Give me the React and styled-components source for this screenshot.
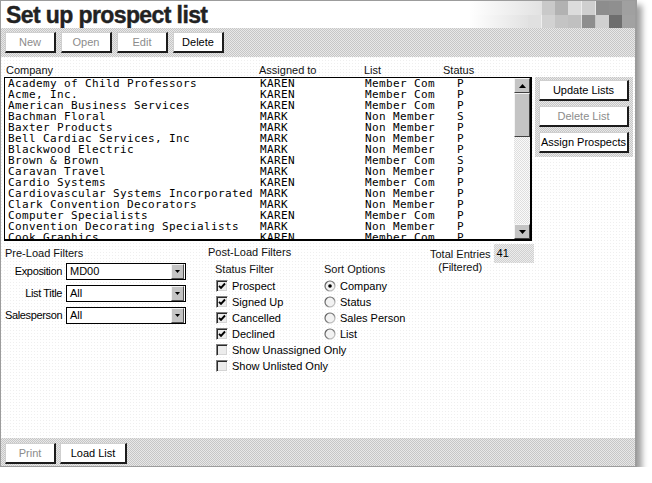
import styled, { createGlobalStyle } from 'styled-components'

const GlobalStyle = createGlobalStyle`
  html, body {
    margin: 0;
    padding: 0;
    background: #fff;
  }
  body {
    font-family: "Liberation Sans", Arial, sans-serif;
    font-size: 11px;
    color: #000;
  }
`

const checker = (a, b) => `repeating-conic-gradient(${a} 0% 25%, ${b} 0% 50%) 0 0 / 2px 2px`
const faintDots = `conic-gradient(from 90deg at 1px 1px, #fff 0 180deg, #efefef 0 270deg, #fff 0) 0 0 / 3px 3px`

const rows = [
  ['Academy of Child Professors', 'KAREN', 'Member Com', 'P'],
  ['Acme, Inc.', 'KAREN', 'Member Com', 'P'],
  ['American Business Services', 'KAREN', 'Member Com', 'P'],
  ['Bachman Floral', 'MARK', 'Non Member', 'S'],
  ['Baxter Products', 'MARK', 'Non Member', 'P'],
  ['Bell Cardiac Services, Inc', 'MARK', 'Non Member', 'P'],
  ['Blackwood Electric', 'MARK', 'Non Member', 'P'],
  ['Brown & Brown', 'KAREN', 'Member Com', 'S'],
  ['Caravan Travel', 'MARK', 'Non Member', 'P'],
  ['Cardio Systems', 'KAREN', 'Member Com', 'P'],
  ['Cardiovascular Systems Incorporated', 'MARK', 'Non Member', 'P'],
  ['Clark Convention Decorators', 'MARK', 'Non Member', 'P'],
  ['Computer Specialists', 'KAREN', 'Member Com', 'P'],
  ['Convention Decorating Specialists', 'MARK', 'Non Member', 'P'],
  ['Cook Graphics', 'KAREN', 'Member Com', 'P'],
]

// Window frame
const Window = styled.div`
  width: 637px;
  height: 467px;
  box-sizing: border-box;
  border: 1px solid #9c9c9c;
  border-right: 2px solid #9c9c9c;
  display: flex;
  flex-direction: column;
  box-shadow: 5px 5px 6px rgba(0, 0, 0, 0.38);
`

const Header = styled.header`
  height: 27px;
  display: flex;
  justify-content: space-between;
  background: #fff;
`

const Title = styled.h1`
  margin: 0;
  padding-left: 5px;
  font-family: "Liberation Sans", Arial, sans-serif;
  font-size: 23px;
  font-weight: bold;
  line-height: 28px;
  letter-spacing: -0.6px;
  color: #222;
  -webkit-text-stroke: 0.4px #222;
`

const Toolbar = styled.div`
  height: ${p => p.$h}px;
  box-sizing: border-box;
  padding: ${p => p.$top}px 4px 0;
  display: flex;
  gap: ${p => p.$gap}px;
  background: ${checker('#c6c6c6', '#e8e8e8')};
`

const Button = styled.button`
  width: ${p => p.$w}px;
  height: 21px;
  box-sizing: border-box;
  padding: 0;
  background: #fff;
  border-style: solid;
  border-width: 1px 2px 2px 1px;
  border-color: #cfcfcf #1c1c1c #1c1c1c #cfcfcf;
  font-family: "Liberation Sans", Arial, sans-serif;
  font-size: 11px;
  color: ${p => (p.disabled ? '#8c8c8c' : '#000')};
`

const Content = styled.main`
  flex: 1;
  padding: 7px 2px 0 3px;
  background: ${faintDots};
`

const TopSection = styled.div`
  display: grid;
  grid-template-columns: 528px 98px;
  grid-template-rows: 13px auto;
  column-gap: 3px;
  align-items: start;
`

const ColumnHeads = styled.div`
  grid-column: 1;
  grid-row: 1;
  height: 13px;
  padding-left: 2px;
  display: grid;
  grid-template-columns: 253px 105px 79px auto;
  line-height: 13px;
  color: #111;
`

const ListBox = styled.div`
  grid-column: 1;
  grid-row: 2;
  height: 164px;
  box-sizing: border-box;
  border-style: solid;
  border-width: 1px 2px 2px 1px;
  border-color: #000;
  background: #fff;
  display: flex;
  overflow: hidden;
`

const Rows = styled.div`
  flex: 1;
  min-width: 0;
  padding-left: 3px;
  overflow: hidden;
`

const Row = styled.div`
  display: grid;
  grid-template-columns: 252px 105px 92px auto;
  height: 11px;
  line-height: 11px;
  font-family: "DejaVu Sans Mono", "Liberation Mono", monospace;
  font-size: 11px;
  letter-spacing: 0.38px;
  white-space: pre;
`

const ScrollBar = styled.div`
  width: 16px;
  flex-shrink: 0;
  display: flex;
  flex-direction: column;
  background: ${checker('#fafafa', '#dedede')};
`

const ScrollButton = styled.div`
  height: 15px;
  box-sizing: border-box;
  background: #c4c4c4;
  border-style: solid;
  border-width: 1px;
  border-color: #f4f4f4 #404040 #404040 #f4f4f4;
  display: flex;
  align-items: center;
  justify-content: center;
`

const Thumb = styled.div`
  height: 44px;
  box-sizing: border-box;
  background: #c4c4c4;
  border-style: solid;
  border-width: 1px;
  border-color: #f4f4f4 #404040 #404040 #f4f4f4;
`

const Track = styled.div`
  flex: 1;
`

const SidePanel = styled.div`
  grid-column: 2;
  grid-row: 2;
  padding: 3px 4px 4px;
  display: flex;
  flex-direction: column;
  gap: 5px;
  background: ${checker('#c6c6c6', '#e8e8e8')};
`

const Filters = styled.div`
  margin-top: 3px;
  padding-left: 1px;
  display: grid;
  grid-template-columns: 203px 222px auto;
  align-items: start;
`

const GroupTitle = styled.div`
  margin-top: ${p => p.$top}px;
  line-height: 13px;
  color: #111;
`

const SelectGrid = styled.div`
  margin-top: 3px;
  display: grid;
  grid-template-columns: 57px 120px;
  column-gap: 4px;
  row-gap: 5px;
`

const FieldLabel = styled.label`
  line-height: 17px;
  text-align: right;
  white-space: nowrap;
  letter-spacing: -0.35px;
`

const Select = styled.div`
  height: 17px;
  box-sizing: border-box;
  border: 1px solid #000;
  background: #fff;
  display: flex;
`

const SelectValue = styled.span`
  flex: 1;
  padding-left: 3px;
  line-height: 15px;
`

const DropButton = styled.span`
  width: 13px;
  box-sizing: border-box;
  margin-right: 1px;
  background: #c4c4c4;
  border-style: solid;
  border-width: 1px;
  border-color: #f4f4f4 #505050 #505050 #f4f4f4;
  display: flex;
  align-items: center;
  justify-content: center;
`

const PostGrid = styled.div`
  margin-top: 4px;
  display: grid;
  grid-template-columns: 116px auto;
`

const OptionCol = styled.div`
  padding-left: ${p => p.$indent}px;
`

const OptionHead = styled.div`
  line-height: 13px;
  margin-bottom: 2px;
  color: #111;
`

const Option = styled.div`
  height: 16px;
  display: flex;
  align-items: center;
  gap: 4px;
  white-space: nowrap;

  svg {
    flex-shrink: 0;
  }
`

const CheckBox = styled.span`
  width: 12px;
  height: 12px;
  flex-shrink: 0;
  margin-left: 1px;
  box-sizing: border-box;
  border-style: solid;
  border-width: 1px;
  border-color: #808080 #fff #fff #808080;
  box-shadow: inset 1px 1px 0 #2a2a2a, inset -1px -1px 0 #d4d4d4;
  background: #ececec;
  display: flex;
  align-items: center;
  justify-content: center;
`

const Totals = styled.div`
  display: flex;
  gap: 3px;
`

const TotalsLabel = styled.div`
  margin-top: 4px;
  line-height: 13px;
  text-align: center;
  color: #111;
`

const TotalsValue = styled.div`
  width: 40px;
  height: 19px;
  box-sizing: border-box;
  padding-left: 3px;
  line-height: 19px;
  background: ${checker('#d0d0d0', '#ececec')};
`

function Arrow({ down }) {
  return (
    <svg width="7" height="4" viewBox="0 0 7 4">
      <path d={down ? 'M0 0H7L3.5 4Z' : 'M0 4H7L3.5 0Z'} fill="#000" />
    </svg>
  )
}

function SmallArrow() {
  return (
    <svg width="5" height="3" viewBox="0 0 5 3">
      <path d="M0 0H5L2.5 3Z" fill="#000" />
    </svg>
  )
}

function Check() {
  return (
    <svg width="8" height="8" viewBox="0 0 8 8">
      <polyline points="1,3.8 3,5.8 7,1.5" fill="none" stroke="#000" strokeWidth="1.9" />
    </svg>
  )
}

function Radio({ checked }) {
  return (
    <svg width="12" height="12" viewBox="0 0 12 12">
      <defs>
        <linearGradient id="rimShade" x1="0" y1="0" x2="1" y2="1">
          <stop offset="0" stopColor="#555" />
          <stop offset="0.5" stopColor="#7a7a7a" />
          <stop offset="1" stopColor="#e4e4e4" />
        </linearGradient>
      </defs>
      <circle cx="6" cy="6" r="5" fill="#f2f2f2" stroke="url(#rimShade)" strokeWidth="1.2" />
      {checked && <circle cx="6" cy="6" r="1.8" fill="#000" />}
    </svg>
  )
}

function Mosaic() {
  const top = [
    [73, '#c9c9c9'], [86, '#b2b2b2'], [99, '#dcdcdc'], [113, '#cfcfcf'],
    [127, '#8d8d8d'], [140, '#8f8f8f'], [153, '#a0a0a0'],
  ]
  const bottom = [
    [59, '#e0e0e0'], [73, '#d2d2d2'], [86, '#c4c4c4'], [99, '#c0c0c0'],
    [113, '#8e8e8e'], [127, '#d0d0d0'], [140, '#6e6e6e'], [153, '#a2a2a2'],
  ]
  return (
    <svg width="166" height="27" viewBox="0 0 166 27">
      <defs>
        <linearGradient id="mosaicFade" x1="0" x2="1">
          <stop offset="0" stopColor="#fff" />
          <stop offset="1" stopColor="#e2e2e2" />
        </linearGradient>
      </defs>
      <rect x="0" y="0" width="73" height="14" fill="url(#mosaicFade)" />
      <rect x="0" y="14" width="59" height="13" fill="url(#mosaicFade)" />
      {top.map(([x, c]) => <rect key={'t' + x} x={x} y="0" width="13.5" height="14" fill={c} />)}
      {bottom.map(([x, c]) => <rect key={'b' + x} x={x} y="14" width="13.5" height="13" fill={c} />)}
    </svg>
  )
}

export default function App() {
  return (
    <>
      <GlobalStyle />
      <Window>
        <Header>
          <Title>Set up prospect list</Title>
          <Mosaic />
        </Header>

        <Toolbar $h={29} $top={4} $gap={5}>
          <Button $w={51} disabled>New</Button>
          <Button $w={51} disabled>Open</Button>
          <Button $w={51} disabled>Edit</Button>
          <Button $w={51}>Delete</Button>
        </Toolbar>

        <Content>
          <TopSection>
            <ColumnHeads>
              <span>Company</span>
              <span>Assigned to</span>
              <span>List</span>
              <span>Status</span>
            </ColumnHeads>
            <ListBox>
              <Rows>
                {rows.map(r => (
                  <Row key={r[0]}>
                    <span>{r[0]}</span>
                    <span>{r[1]}</span>
                    <span>{r[2]}</span>
                    <span>{r[3]}</span>
                  </Row>
                ))}
              </Rows>
              <ScrollBar>
                <ScrollButton><Arrow /></ScrollButton>
                <Thumb />
                <Track />
                <ScrollButton><Arrow down /></ScrollButton>
              </ScrollBar>
            </ListBox>
            <SidePanel>
              <Button $w={90}>Update Lists</Button>
              <Button $w={90} disabled>Delete List</Button>
              <Button $w={90}>Assign Prospects</Button>
            </SidePanel>
          </TopSection>

          <Filters>
            <div>
              <GroupTitle $top={3}>Pre-Load Filters</GroupTitle>
              <SelectGrid>
                <FieldLabel>Exposition</FieldLabel>
                <Select><SelectValue>MD00</SelectValue><DropButton><SmallArrow /></DropButton></Select>
                <FieldLabel>List Title</FieldLabel>
                <Select><SelectValue>All</SelectValue><DropButton><SmallArrow /></DropButton></Select>
                <FieldLabel>Salesperson</FieldLabel>
                <Select><SelectValue>All</SelectValue><DropButton><SmallArrow /></DropButton></Select>
              </SelectGrid>
            </div>

            <div>
              <GroupTitle $top={2}>Post-Load Filters</GroupTitle>
              <PostGrid>
                <OptionCol $indent={7}>
                  <OptionHead>Status Filter</OptionHead>
                  <Option><CheckBox><Check /></CheckBox>Prospect</Option>
                  <Option><CheckBox><Check /></CheckBox>Signed Up</Option>
                  <Option><CheckBox><Check /></CheckBox>Cancelled</Option>
                  <Option><CheckBox><Check /></CheckBox>Declined</Option>
                  <Option><CheckBox />Show Unassigned Only</Option>
                  <Option><CheckBox />Show Unlisted Only</Option>
                </OptionCol>
                <OptionCol $indent={0}>
                  <OptionHead>Sort Options</OptionHead>
                  <Option><Radio checked />Company</Option>
                  <Option><Radio />Status</Option>
                  <Option><Radio />Sales Person</Option>
                  <Option><Radio />List</Option>
                </OptionCol>
              </PostGrid>
            </div>

            <Totals>
              <TotalsLabel>Total Entries<br />(Filtered)</TotalsLabel>
              <TotalsValue>41</TotalsValue>
            </Totals>
          </Filters>
        </Content>

        <Toolbar $h={28} $top={5} $gap={4}>
          <Button $w={51} disabled>Print</Button>
          <Button $w={67}>Load List</Button>
        </Toolbar>
      </Window>
    </>
  )
}
